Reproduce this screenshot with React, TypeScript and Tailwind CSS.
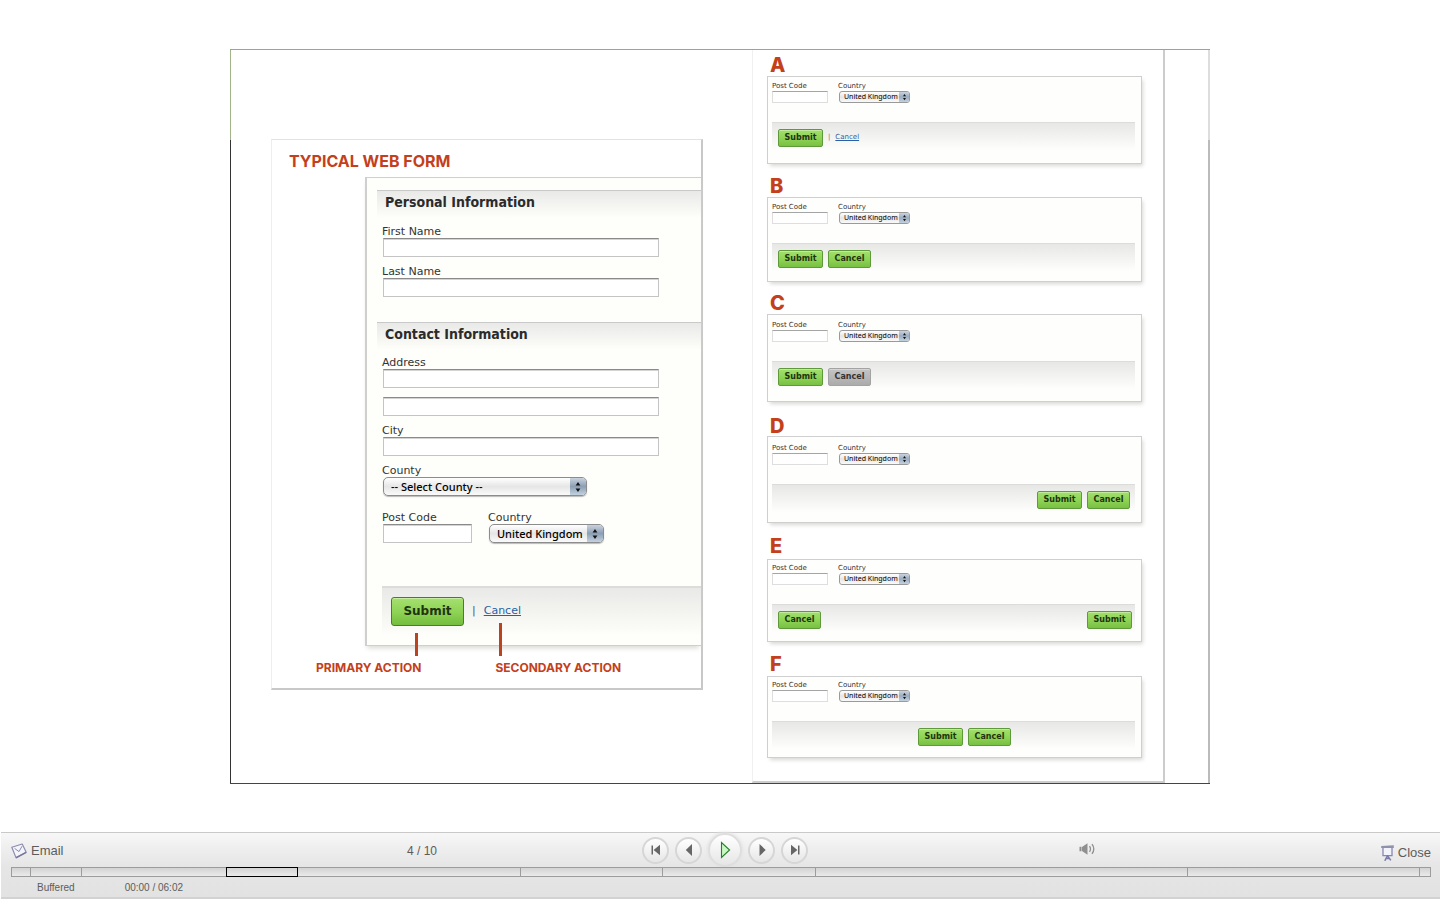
import { useId, type ReactNode } from "react";

type Size = "lg" | "sm";

function Stepper({ size }: { size: Size }) {
  return (
    <span
      className={
        size === "lg"
          ? "pointer-events-none absolute inset-y-px right-px flex w-4 items-center justify-center rounded-r-[4px] bg-linear-to-b from-[#c9d3df] via-[#8d9fb4] to-[#c3d2e0]"
          : "pointer-events-none absolute inset-y-px right-px flex w-2.5 items-center justify-center rounded-r-[2px] bg-linear-to-b from-[#c9d3df] via-[#9aabbf] to-[#c3d2e0]"
      }
    >
      <svg viewBox="0 0 8 12" className={size === "lg" ? "h-3 w-2" : "h-2 w-[5px]"} fill="#111">
        <path d="M4 1l2.4 3.6H1.6zM4 11L1.6 7.4h4.8z" />
      </svg>
    </span>
  );
}

function Field({ label, wide = false, extra = false }: { label: string; wide?: boolean; extra?: boolean }) {
  const id = useId();
  const box =
    "block h-[19px] border border-[#c4c4c4] border-t-[#8a8a8a] bg-white px-1 text-[11px] shadow-[inset_0_1px_0_#d4d4d4] outline-none";
  return (
    <div className="flex flex-col">
      <label htmlFor={id} className="h-3.5 text-[11px] leading-4">
        {label}
      </label>
      <input id={id} type="text" className={`${box} ml-px ${wide ? "w-[276px]" : "w-[89px]"}`} />
      {extra && <input type="text" aria-label="Address line 2" className={`${box} mt-[9px] ml-px w-[276px]`} />}
    </div>
  );
}

function Choice({ label, value, wide = false }: { label: string; value: string; wide?: boolean }) {
  const id = useId();
  return (
    <div className="flex flex-col items-start">
      <label htmlFor={id} className="h-3.5 text-[11px] leading-4">
        {label}
      </label>
      <div className="relative ml-px">
        <select
          id={id}
          className={`block h-[19px] appearance-none rounded-[5px] border border-[#8c8c8c] bg-linear-to-b from-white via-[#e6e6e6] to-[#fafafa] pl-[7px] font-['Noto_Sans',sans-serif] text-[11px] leading-4 font-medium text-black shadow-[0_1px_1px_#bbb] outline-none ${wide ? "w-[204px]" : "w-[115px]"}`}
        >
          <option>{value}</option>
        </select>
        <Stepper size="lg" />
      </div>
    </div>
  );
}

function SectionHeading({ children }: { children: ReactNode }) {
  return (
    <h3 className="ml-2.5 h-7 border-t border-[#c9c9c9] bg-linear-to-b from-[#e9e9e8] to-[#fefffa] pl-2 font-['DejaVu_Sans_Condensed','DejaVu_Sans',sans-serif] text-[14px] leading-[22px] font-bold text-[#2b2b2b]">
      {children}
    </h3>
  );
}

function WebForm() {
  return (
    <section className="mt-[89px] ml-10 flex w-[432px] flex-col border-t border-r-2 border-b-2 border-l border-t-[#e2e2e2] border-r-[#c8c8c8] border-b-[#c8c8c8] border-l-[#eeeeee]">
      <h2 className="mt-[11px] ml-[17px] font-[Inter,sans-serif] text-[16px] leading-5 font-bold text-[#c3401a]">
        TYPICAL WEB FORM
      </h2>
      <form
        onSubmit={(e) => e.preventDefault()}
        className="mt-1.5 ml-[93px] flex h-[469px] flex-col border-y border-l-2 border-[#cfcfcf] bg-[#fefffa] pt-3 text-[#333] shadow-[0_4px_5px_-2px_#d8d8d4]"
      >
        <SectionHeading>Personal Information</SectionHeading>
        <div className="mt-1.5 ml-[15px] flex flex-col gap-[7px]">
          <Field label="First Name" wide />
          <Field label="Last Name" wide />
        </div>
        <div className="mt-[25px]">
          <SectionHeading>Contact Information</SectionHeading>
        </div>
        <div className="mt-[5px] ml-[15px] flex flex-col gap-[7px]">
          <Field label="Address" wide extra />
          <Field label="City" wide />
          <Choice label="County" value="-- Select County --" wide />
        </div>
        <div className="mt-3.5 ml-[15px] flex gap-4">
          <Field label="Post Code" />
          <Choice label="Country" value="United Kingdom" />
        </div>
        <div className="mt-[43px] ml-[15px] flex h-[50px] items-center border-t-2 border-[#dcdcda] bg-linear-to-b from-[#e9e9e7] to-[#fefffa] pb-0.5 pl-[9px]">
          <button
            type="submit"
            className="h-[29px] w-[73px] rounded-[3px] border border-[#4d7a2c] bg-linear-to-b from-[#a5e070] via-[#8fd455] to-[#74bd3f] text-[12px] leading-none font-bold text-[#1f3310] shadow-[inset_0_1px_0_#c6efa2]"
          >
            Submit
          </button>
          <span className="ml-2 text-[11px] text-[#555]">|</span>
          <a href="#cancel" className="ml-2 text-[11px] text-[#2a5fa5] underline">
            Cancel
          </a>
        </div>
      </form>
      <div className="mt-3.5 mb-3 ml-11 flex gap-[74px] font-[Inter,sans-serif] text-[12px] leading-4 font-bold text-[#c3401a]">
        <span className="relative">
          PRIMARY ACTION
          <span className="absolute -top-[27px] left-[99px] h-[23px] w-[3px] bg-[#bb4420]" />
        </span>
        <span className="relative">
          SECONDARY ACTION
          <span className="absolute -top-[37px] left-1 h-[33px] w-[3px] bg-[#bb4420]" />
        </span>
      </div>
    </section>
  );
}

const green =
  "border-[#5f9a3a] bg-linear-to-b from-[#a3df6e] via-[#8fd455] to-[#78c043] text-[#1f3310] shadow-[inset_0_1px_0_#c0eb9b]";
const grey = "border-[#a3a3a3] bg-linear-to-b from-[#c4c4c4] to-[#ababab] text-[#333] shadow-[inset_0_1px_0_#d6d6d6]";

function MiniButton({ label, muted = false }: { label: string; muted?: boolean }) {
  return (
    <button
      type="button"
      className={`h-[18px] rounded-[2px] border text-[8px] leading-none font-bold ${label === "Submit" ? "w-[45px]" : "w-[43px]"} ${muted ? grey : green}`}
    >
      {label}
    </button>
  );
}

type Variant = { letter: string; gap: string; head: string; pad: string; bar: string; actions: ReactNode };

const variants: Variant[] = [
  {
    letter: "A",
    gap: "mt-[5px]",
    head: "mb-px",
    pad: "pt-[5px] pb-[13px]",
    bar: "pl-1.5",
    actions: (
      <>
        <MiniButton label="Submit" />
        <span className="text-[7px] text-[#777]">|</span>
        <a href="#cancel" className="text-[7px] text-[#2a5fa5] underline">
          Cancel
        </a>
      </>
    ),
  },
  {
    letter: "B",
    gap: "mt-3",
    head: "mb-px",
    pad: "pt-[5px] pb-2.5",
    bar: "pl-1.5",
    actions: (
      <>
        <MiniButton label="Submit" />
        <MiniButton label="Cancel" />
      </>
    ),
  },
  {
    letter: "C",
    gap: "mt-[11px]",
    head: "mb-px",
    pad: "pt-1.5 pb-3",
    bar: "pl-1.5",
    actions: (
      <>
        <MiniButton label="Submit" />
        <MiniButton label="Cancel" muted />
      </>
    ),
  },
  {
    letter: "D",
    gap: "mt-3.5",
    head: "mb-0",
    pad: "pt-[7px] pb-2.5",
    bar: "justify-end pr-[5px]",
    actions: (
      <>
        <MiniButton label="Submit" />
        <MiniButton label="Cancel" />
      </>
    ),
  },
  {
    letter: "E",
    gap: "mt-[13px]",
    head: "mb-[3px]",
    pad: "pt-1 pb-[9px]",
    bar: "justify-between pl-1.5 pr-[3px]",
    actions: (
      <>
        <MiniButton label="Cancel" />
        <MiniButton label="Submit" />
      </>
    ),
  },
  {
    letter: "F",
    gap: "mt-3",
    head: "mb-0.5",
    pad: "pt-1 pb-2",
    bar: "justify-center pl-[22px]",
    actions: (
      <>
        <MiniButton label="Submit" />
        <MiniButton label="Cancel" />
      </>
    ),
  },
];

function VariantCard({ v }: { v: Variant }) {
  const id = useId();
  return (
    <section className={v.gap}>
      <h2 className={`ml-[3px] h-5 font-[Inter,sans-serif] text-[20px] leading-5 font-extrabold text-[#c3401a] ${v.head}`}>
        {v.letter}
      </h2>
      <div
        className={`border border-[#cfcfcf] bg-[#fefffc] pr-1.5 pl-1 text-[#333] shadow-[2px_3px_4px_-1px_#d8d8d6] ${v.pad}`}
      >
        <div className="flex h-10 items-start">
          <div className="flex w-[66px] flex-col">
            <label htmlFor={`${id}-post`} className="h-[9px] text-[7px] leading-2">
              Post Code
            </label>
            <input
              id={`${id}-post`}
              type="text"
              className="block h-3 w-14 border border-[#dedede] border-t-[#a5a5a5] bg-white px-0.5 text-[7px] outline-none"
            />
          </div>
          <div className="flex flex-col">
            <label htmlFor={`${id}-country`} className="h-[9px] text-[7px] leading-2">
              Country
            </label>
            <div className="relative ml-px">
              <select
                id={`${id}-country`}
                className="block h-3 w-[71px] appearance-none rounded-[3px] border border-[#9a9a9a] bg-linear-to-b from-white via-[#e6e6e6] to-[#fafafa] pl-1 font-['Noto_Sans',sans-serif] text-[7px] leading-[10px] text-black outline-none"
              >
                <option>United Kingdom</option>
              </select>
              <Stepper size="sm" />
            </div>
          </div>
        </div>
        <div
          className={`flex h-7 items-center gap-[5px] border-t border-[#dcdcda] bg-linear-to-b from-[#e7e7e6] to-[#fefffc] pt-0.5 ${v.bar}`}
        >
          {v.actions}
        </div>
      </div>
    </section>
  );
}

function RoundButton({ label, children, main = false }: { label: string; children: ReactNode; main?: boolean }) {
  return (
    <button
      type="button"
      aria-label={label}
      className={`flex items-center justify-center rounded-full border-2 border-[#d6d6d6] bg-linear-to-b from-white to-[#e6e6e6] ${main ? "size-[34px] border-[#dedede] shadow-[0_0_3px_1px_#e3e3e3]" : "size-[27px]"}`}
    >
      {children}
    </button>
  );
}

const slides = [
  { length: 19, current: false },
  { length: 51, current: false },
  { length: 144, current: false },
  { length: 72, current: true },
  { length: 223, current: false },
  { length: 142, current: false },
  { length: 153, current: false },
  { length: 372, current: false },
  { length: 232, current: false },
  { length: 10, current: false },
];
const total = slides.reduce((sum, s) => sum + s.length, 0);

function PlayerBar() {
  return (
    <footer className="mb-px ml-px flex h-[67px] flex-col border-t border-b-2 border-t-[#c9c9c9] border-b-[#d2d2d2] bg-linear-to-b from-[#f7f7f7] via-[#e6e6e6] to-[#e2e2e2] pr-[9px] pl-2.5 font-['Liberation_Sans',sans-serif] text-[#5c5c5c]">
      <div className="grid h-[34px] grid-cols-[1fr_auto_1fr] items-center">
        <div className="flex items-center justify-between pr-[197px]">
          <button type="button" className="flex items-center gap-1 text-[13px] leading-4">
            <svg viewBox="0 0 16 16" className="size-4" strokeLinejoin="round">
              <path d="M0.8 4.2L11.2 1L15.2 9.2L5 14.6Z" fill="#f4f4fb" stroke="#8b8bb0" strokeWidth="1.2" />
              <path d="M5 14.8L15.2 9.4" stroke="#77779c" strokeWidth="1.4" />
              <path d="M3.6 5.4L8 8.6L11 3.2" fill="none" stroke="#8b8bb0" strokeWidth="1" />
            </svg>
            Email
          </button>
          <span className="text-[12px] leading-4">4 / 10</span>
        </div>
        <div className="mb-0.5 ml-2 flex items-center gap-1.5">
          <RoundButton label="First">
            <svg viewBox="0 0 12 12" className="size-3" fill="#666">
              <path d="M1.5 1.5h1.5v9H1.5zM10 0.8v10.4L3.6 6z" />
            </svg>
          </RoundButton>
          <RoundButton label="Previous">
            <svg viewBox="0 0 12 12" className="size-3" fill="#666">
              <path d="M9 0v12L2.8 6z" />
            </svg>
          </RoundButton>
          <RoundButton label="Play" main>
            <svg viewBox="0 0 12 18" className="ml-0.5 h-[18px] w-3">
              <path d="M1.5 1.5V16.5L9.6 9Z" fill="#c9f7c4" stroke="#24802a" strokeWidth="1.1" />
            </svg>
          </RoundButton>
          <RoundButton label="Next">
            <svg viewBox="0 0 12 12" className="size-3" fill="#666">
              <path d="M3.5 0v12L9.7 6z" />
            </svg>
          </RoundButton>
          <RoundButton label="Last">
            <svg viewBox="0 0 12 12" className="size-3" fill="#666">
              <path d="M9 1.5h1.5v9H9zM2 0.8v10.4L8.4 6z" />
            </svg>
          </RoundButton>
        </div>
        <div className="flex items-center justify-between pl-[271px]">
          <button type="button" aria-label="Volume" className="mb-1">
            <svg viewBox="0 0 17 12" className="h-3 w-[17px]">
              <path d="M0.5 3.8h2v4.4h-2zM3 4L8.5 0.2v11.6L3 8z" fill="#8f8f8f" />
              <path d="M10.5 3.2q2 2.8 0 5.6M13 1.2q3.6 4.8 0 9.6" fill="none" stroke="#8f8f8f" strokeWidth="1.3" />
            </svg>
          </button>
          <button type="button" className="mt-1 flex items-center gap-1 text-[13px] leading-4">
            <svg viewBox="0 0 13 16" className="h-4 w-[13px]">
              <path d="M2 2h9v8.6H2z" fill="#f2f2fb" stroke="#8787b5" strokeWidth="1.3" />
              <path d="M0.2 1L12.8 0.2v2.8H0.2z" fill="#8e93ad" />
              <path d="M6.5 10.6L3.8 15.8M6.5 10.6L9.8 15.4M5 13.4h3.4" fill="none" stroke="#7a7aab" strokeWidth="1.5" />
            </svg>
            Close
          </button>
        </div>
      </div>
      <div className="flex h-2.5 border border-[#9c9c9c] bg-linear-to-b from-[#d3d3d3] to-[#eaeaea]">
        {slides.map((s, i) => (
          <div
            key={i}
            className={
              s.current
                ? "-my-px border border-black"
                : "border-r border-[#9c9c9c] last:border-r-0 [&:nth-child(3)]:border-r-0"
            }
            style={{ width: `${(s.length / total) * 100}%` }}
          />
        ))}
      </div>
      <div className="mt-1 flex gap-[50px] pl-[26px] text-[10px] leading-[14px]">
        <span>Buffered</span>
        <span>00:00 / 06:02</span>
      </div>
    </footer>
  );
}

export default function App() {
  return (
    <div className="flex min-h-screen flex-col bg-white font-['DejaVu_Sans',sans-serif]">
      <main className="flex flex-1 justify-center pt-[49px]">
        <div className="flex w-full max-w-[980px] items-start self-start border-t border-b border-t-[#9aa886] border-b-[#444]">
          <div className="w-px self-stretch bg-[linear-gradient(#a3b38a_90px,#333_90px)]" />
          <WebForm />
          <div className="ml-[49px] flex flex-1 flex-col self-stretch border-r-2 border-b-2 border-l border-r-[#cccccc] border-b-[#cccccc] border-l-[#f0f0f0] pr-[21px] pb-[23px] pl-3.5">
            {variants.map((v) => (
              <VariantCard key={v.letter} v={v} />
            ))}
          </div>
          <div className="ml-[43px] w-0.5 self-stretch bg-[linear-gradient(#dddddd_90px,#bbbbbb_90px)]" />
        </div>
      </main>
      <PlayerBar />
    </div>
  );
}
